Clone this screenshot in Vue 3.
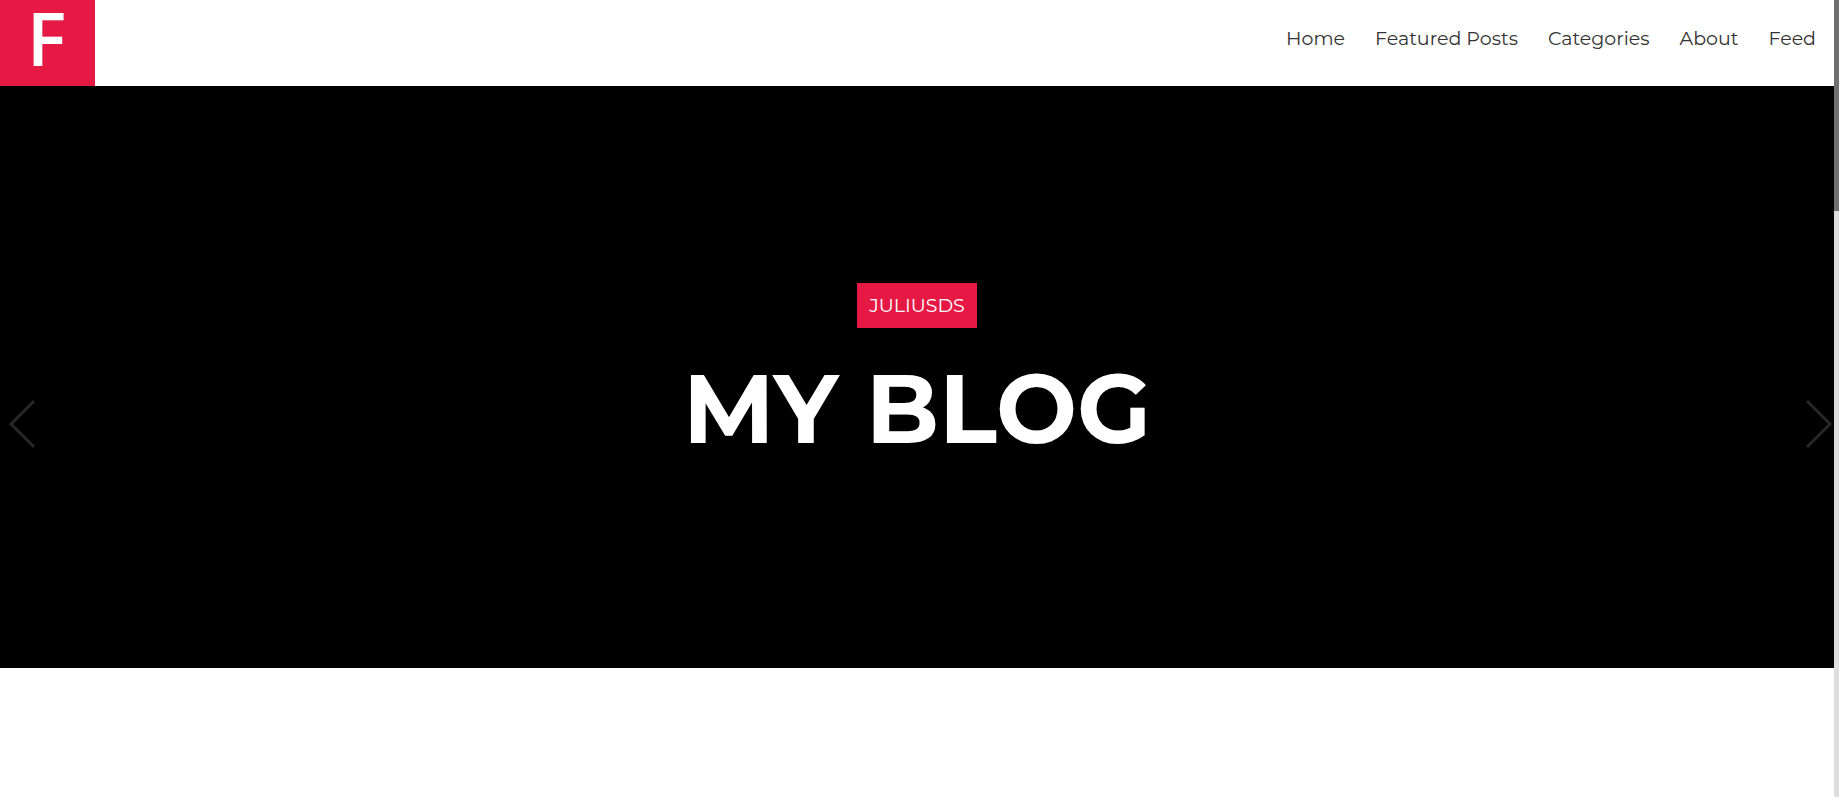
<script setup>
const links = [
  { label: 'Home', href: '#home' },
  { label: 'Featured Posts', href: '#featured' },
  { label: 'Categories', href: '#categories' },
  { label: 'About', href: '#about' },
  { label: 'Feed', href: '#feed' },
]
</script>

<template>
  <div class="shell">
    <div class="page">
      <header class="header">
        <a class="logo" href="#home">F</a>
        <nav class="nav">
          <a v-for="link in links" :key="link.href" :href="link.href">{{ link.label }}</a>
        </nav>
      </header>
      <main id="home" class="hero">
        <button class="arrow" type="button" aria-label="Previous slide">
          <svg width="28" height="50" viewBox="0 0 28 50"><path d="M26 2L3 25L26 48" /></svg>
        </button>
        <div class="slide">
          <a class="tag" href="#about">JULIUSDS</a>
          <h1>MY BLOG</h1>
        </div>
        <button class="arrow" type="button" aria-label="Next slide">
          <svg width="28" height="50" viewBox="0 0 28 50"><path d="M2 2L25 25L2 48" /></svg>
        </button>
      </main>
    </div>
    <div class="track"><div class="thumb"></div></div>
  </div>
</template>

<style>
body {
  background: #fff;
}
</style>

<style scoped>
.shell {
  display: flex;
  min-height: 100vh;
  padding-right: 4px;
  background: #fff;
  font-family: Montserrat, Inter, sans-serif;
}
.page {
  flex: 1;
}
.header {
  display: flex;
  justify-content: space-between;
  height: 86px;
}
.logo {
  box-sizing: border-box;
  width: 95px;
  padding-right: 2px;
  background: #e61945;
  color: #fff;
  font: 600 74px/75px "Open Sans", sans-serif;
  text-align: center;
  text-decoration: none;
}
.nav {
  display: flex;
  gap: 30px;
  padding: 0 18px;
}
.nav a {
  color: #333;
  font-size: 19px;
  font-weight: 400;
  line-height: 78px;
  text-decoration: none;
}
.hero {
  display: flex;
  align-items: center;
  justify-content: space-between;
  height: 582px;
  background: #000;
}
.arrow {
  display: flex;
  margin-top: 93px;
  padding: 0 1px 0 8px;
  border: 0;
  background: none;
}
.arrow path {
  fill: none;
  stroke: #262626;
  stroke-width: 3;
}
.slide {
  display: flex;
  flex-direction: column;
  align-items: center;
  padding-bottom: 4px;
}
.tag {
  padding: 0 12px;
  background: #e61945;
  color: #fff;
  font-size: 19px;
  font-weight: 400;
  line-height: 45px;
  text-decoration: none;
}
h1 {
  margin: 23px 0 0;
  color: #fff;
  font-size: 96px;
  font-weight: 700;
  line-height: 116px;
}
.track {
  width: 5px;
  background: #dedede;
}
.thumb {
  height: 211px;
  background: #707070;
}
</style>
